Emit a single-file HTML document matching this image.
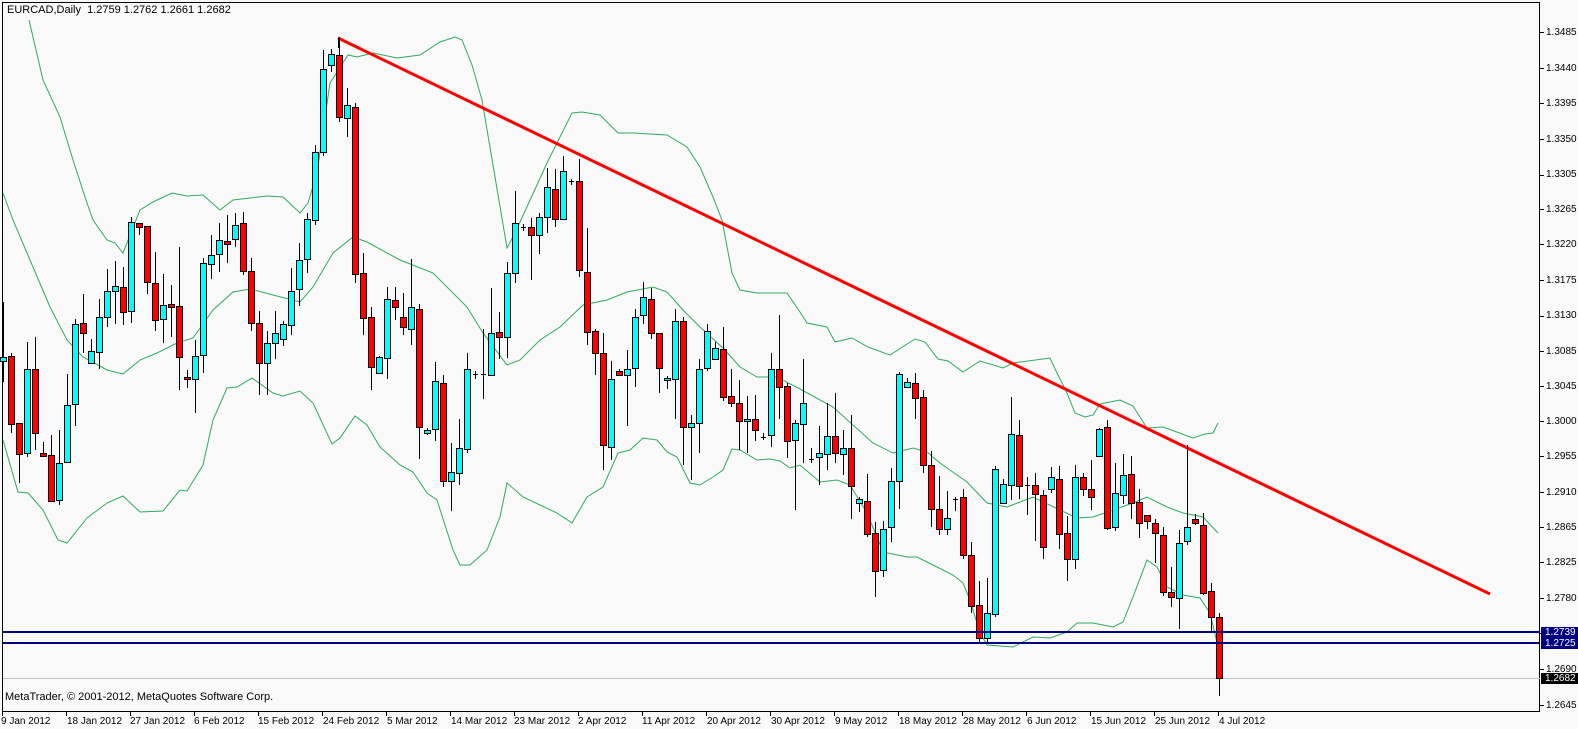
<!DOCTYPE html>
<html><head><meta charset="utf-8">
<style>
html,body{margin:0;padding:0;background:#f9f9f9;}
body{width:1578px;height:729px;overflow:hidden;position:relative;font-family:"Liberation Sans",Tahoma,sans-serif;}
.t{position:absolute;font-size:10px;color:#000;white-space:nowrap;line-height:11px;}
.py{left:1546px;}
.dx{top:716px;}
.box{position:absolute;left:1541px;width:37px;height:11px;color:#fff;font-size:10px;line-height:11px;padding-left:4px;box-sizing:border-box;}
</style></head><body>
<svg id="s" width="1578" height="729" style="position:absolute;left:0;top:0" xmlns="http://www.w3.org/2000/svg">
<rect x="2.5" y="2.5" width="1537" height="709" fill="#f9f9f9" stroke="#000" stroke-width="1"/>
<line x1="3" y1="678.5" x2="1540" y2="678.5" stroke="#c0c0c0" stroke-width="1"/>
<g fill="none" stroke="#2eaa5e" stroke-width="1">
<polyline points="29,20 43,80 60,117 73,160 87,203 93,220 107,240 115,243 123,253 140,210 153,202 172,193 187,196 203,195 220,210 233,200 250,198 267,196 283,197 300,213 308,203 317,173 330,83 348,55 357,57 373,53 397,58 420,55 440,42 455,37 462,40 472,65 482,100 507,248 515,233 547,163 572,113 582,112 600,115 618,133 633,133 667,135 687,147 700,167 713,197 722,220 732,273 740,290 757,293 787,293 800,312 807,323 827,327 835,342 852,338 868,347 890,355 915,339 925,342 938,359 948,361 963,372 980,361 1003,368 1013,363 1050,358 1057,373 1067,393 1075,413 1085,417 1093,415 1100,404 1120,400 1133,406 1147,428 1163,427 1193,438 1205,434 1213,433 1218,423"/>
<polyline points="3,193 13,220 30,260 50,307 67,340 83,357 107,370 123,374 140,360 157,353 177,343 193,338 213,310 233,292 250,289 273,295 300,302 313,287 333,253 353,237 367,242 400,260 433,273 467,307 483,333 507,365 520,360 540,340 560,327 583,305 607,300 627,292 653,287 667,292 683,310 700,327 723,348 740,367 757,377 777,377 800,389 833,407 873,443 893,453 913,448 927,452 940,463 967,482 987,503 1007,507 1033,497 1060,510 1077,518 1093,517 1113,510 1133,503 1147,497 1167,507 1183,513 1203,517 1218,533"/>
<polyline points="3,440 18,492 28,493 43,510 58,540 67,543 87,518 107,503 123,496 140,512 163,511 180,490 187,491 203,465 213,420 227,388 237,387 252,378 273,393 283,396 300,391 313,403 332,444 340,438 355,416 367,425 380,447 400,465 413,472 427,493 437,500 453,550 460,565 470,565 487,550 500,517 507,483 523,497 540,505 557,513 572,523 587,497 603,487 618,453 630,450 643,438 657,440 667,452 677,457 690,483 700,485 713,477 723,470 732,449 740,450 757,460 770,459 780,461 790,468 800,465 820,482 837,480 850,485 867,513 883,552 907,557 917,557 937,567 953,575 963,583 970,600 980,633 987,645 1013,647 1033,637 1050,638 1067,632 1077,623 1093,623 1113,627 1123,622 1133,597 1147,560 1157,567 1167,587 1183,595 1200,598 1210,613 1218,647"/>
</g>
<line x1="338" y1="38" x2="1490" y2="594" stroke="#ff0000" stroke-width="3"/>
<line x1="338.5" y1="38" x2="338.5" y2="48" stroke="#000" stroke-width="1"/>
<g id="c"></g>
<line x1="3" y1="632" x2="1540" y2="632" stroke="#000080" stroke-width="2"/>
<line x1="3" y1="643" x2="1540" y2="643" stroke="#000080" stroke-width="2"/>
<g stroke="#000" stroke-width="1" id="tk"></g>
</svg>
<div class="t" style="left:7px;top:5px;font-size:11px;">EURCAD,Daily&nbsp;&nbsp;1.2759 1.2762 1.2661 1.2682</div>
<div class="t" style="left:5px;top:692px;font-size:11px;">MetaTrader, © 2001-2012, MetaQuotes Software Corp.</div>
<div class="t py" style="top:27px">1.3485</div>
<div class="t py" style="top:63px">1.3440</div>
<div class="t py" style="top:98px">1.3395</div>
<div class="t py" style="top:134px">1.3350</div>
<div class="t py" style="top:169px">1.3305</div>
<div class="t py" style="top:204px">1.3265</div>
<div class="t py" style="top:239px">1.3220</div>
<div class="t py" style="top:275px">1.3175</div>
<div class="t py" style="top:310px">1.3130</div>
<div class="t py" style="top:346px">1.3085</div>
<div class="t py" style="top:381px">1.3045</div>
<div class="t py" style="top:416px">1.3000</div>
<div class="t py" style="top:451px">1.2955</div>
<div class="t py" style="top:487px">1.2910</div>
<div class="t py" style="top:522px">1.2865</div>
<div class="t py" style="top:557px">1.2825</div>
<div class="t py" style="top:593px">1.2780</div>
<div class="t py" style="top:664px">1.2690</div>
<div class="t py" style="top:700px">1.2645</div>
<div class="box" style="top:627px;background:#000080">1.2739</div>
<div class="box" style="top:638px;background:#000080">1.2725</div>
<div class="box" style="top:673px;background:#000">1.2682</div>
<div class="t dx" style="left:1px">9 Jan 2012</div>
<div class="t dx" style="left:67px">18 Jan 2012</div>
<div class="t dx" style="left:130px">27 Jan 2012</div>
<div class="t dx" style="left:194px">6 Feb 2012</div>
<div class="t dx" style="left:258px">15 Feb 2012</div>
<div class="t dx" style="left:323px">24 Feb 2012</div>
<div class="t dx" style="left:387px">5 Mar 2012</div>
<div class="t dx" style="left:451px">14 Mar 2012</div>
<div class="t dx" style="left:514px">23 Mar 2012</div>
<div class="t dx" style="left:578px">2 Apr 2012</div>
<div class="t dx" style="left:642px">11 Apr 2012</div>
<div class="t dx" style="left:707px">20 Apr 2012</div>
<div class="t dx" style="left:771px">30 Apr 2012</div>
<div class="t dx" style="left:835px">9 May 2012</div>
<div class="t dx" style="left:899px">18 May 2012</div>
<div class="t dx" style="left:963px">28 May 2012</div>
<div class="t dx" style="left:1027px">6 Jun 2012</div>
<div class="t dx" style="left:1091px">15 Jun 2012</div>
<div class="t dx" style="left:1155px">25 Jun 2012</div>
<div class="t dx" style="left:1219px">4 Jul 2012</div>
<script>
var D=[[357,361,302,382,1],[356,424,353,433,0],[423,454,423,483,0],[369,453,342,457,1],[369,433,337,450,0],[453,456,442,456,0],[455,501,435,501,0],[463,500,430,505,1],[405,462,374,462,1],[324,404,319,426,1],[323,333,294,353,0],[351,363,339,363,1],[317,352,299,369,1],[291,317,269,327,1],[286,291,261,324,1],[287,312,267,325,0],[222,311,217,323,1],[223,227,223,235,0],[226,282,226,294,0],[283,320,252,331,0],[305,319,274,343,1],[304,307,285,337,0],[306,357,247,390,0],[377,379,370,388,0],[356,379,340,413,1],[263,355,258,373,1],[255,264,235,279,1],[240,254,223,272,1],[241,244,215,263,0],[225,239,213,247,1],[223,271,212,275,0],[271,323,258,331,0],[323,363,311,395,0],[343,363,331,395,1],[333,343,311,359,1],[324,339,321,346,1],[291,325,268,335,1],[260,289,243,306,1],[219,259,213,273,1],[152,220,145,225,1],[69,152,50,156,1],[54,65,49,72,1],[55,117,37,122,0],[105,118,88,137,1],[107,274,103,283,0],[273,318,253,335,0],[317,367,307,390,0],[357,373,356,374,1],[299,358,287,379,1],[300,307,287,320,0],[317,327,293,335,0],[307,329,259,345,1],[309,427,304,459,0],[430,433,428,435,1],[381,429,362,441,1],[383,481,375,487,0],[472,481,443,511,1],[448,473,419,485,1],[369,449,353,453,1],[374,374,371,379,1],[374,374,329,399,1],[333,375,288,376,1],[332,337,312,359,0],[273,337,262,358,1],[223,273,191,283,1],[227,227,224,231,1],[227,235,218,280,0],[217,235,213,254,1],[187,217,168,233,1],[189,219,169,227,0],[171,219,156,220,1],[181,181,179,185,1],[181,270,159,277,0],[272,332,228,345,0],[331,353,329,375,0],[353,445,333,470,0],[379,447,361,460,1],[371,375,369,375,0],[369,375,350,426,1],[317,368,309,387,1],[297,315,282,324,1],[299,333,288,339,0],[333,368,333,393,0],[378,380,376,389,1],[321,379,309,419,1],[321,427,317,465,0],[423,427,415,480,1],[369,423,359,453,1],[331,368,324,371,1],[348,359,342,359,1],[349,397,327,401,0],[396,403,369,407,0],[403,421,380,450,0],[419,421,396,453,1],[419,430,395,441,0],[437,437,433,440,1],[369,435,353,447,1],[369,387,315,419,0],[386,441,383,458,0],[423,440,420,510,1],[403,424,359,463,1],[459,459,448,463,1],[453,457,426,485,1],[436,454,403,470,1],[436,453,393,463,0],[448,454,430,475,1],[448,486,415,519,0],[499,503,497,512,1],[501,534,474,537,0],[533,571,522,597,0],[529,570,521,577,1],[481,527,468,542,1],[374,481,372,509,1],[382,387,378,388,1],[383,398,373,419,0],[397,465,390,473,0],[465,509,451,527,0],[509,529,476,535,0],[518,529,491,535,1],[499,499,497,511,1],[497,555,489,559,0],[555,606,542,613,0],[605,638,581,642,0],[613,638,578,642,1],[469,614,466,617,1],[484,503,479,503,1],[434,485,397,500,1],[435,486,420,499,0],[485,485,477,515,1],[485,494,473,541,0],[495,547,490,559,0],[477,489,467,493,1],[479,534,466,549,0],[533,559,516,581,0],[477,559,465,569,1],[477,489,473,496,0],[489,497,460,510,0],[429,456,428,457,1],[427,528,420,530,0],[493,527,463,531,1],[475,495,454,504,1],[474,503,456,519,0],[502,523,489,538,0],[515,521,515,529,0],[523,533,519,563,0],[535,592,527,596,0],[592,597,567,607,0],[543,598,530,629,1],[527,541,445,545,1],[519,523,514,525,0],[525,593,513,595,0],[591,617,583,633,0],[617,678,613,696,0]];
var g=document.getElementById("c"),h="";
for(var i=0;i<D.length;i++){var d=D[i],x=3+8*i;
h+='<line x1="'+(x+0.5)+'" y1="'+d[2]+'" x2="'+(x+0.5)+'" y2="'+d[3]+'" stroke="#000" stroke-width="1"/>';
if(d[1]-d[0]<2){h+='<line x1="'+(x-2)+'" y1="'+(d[0]+0.5)+'" x2="'+(x+3)+'" y2="'+(d[0]+0.5)+'" stroke="#000" stroke-width="1"/>';}
else{h+='<rect x="'+(x-2.5)+'" y="'+(d[0]+0.5)+'" width="6" height="'+(d[1]-d[0])+'" fill="'+(d[4]?'#00ffff':'#ff0000')+'" stroke="#000" stroke-width="1"/>';}}
g.innerHTML=h;
var t="",ys=[32,68,103,139,175,209,244,280,316,351,386,421,456,492,527,562,598,633,669,705];
for(var j=0;j<ys.length;j++)t+='<line x1="1540" y1="'+(ys[j]+0.5)+'" x2="1544" y2="'+(ys[j]+0.5)+'"/>';
for(var k=0;k<20;k++){var xx=2+64*k;t+='<line x1="'+(xx+0.5)+'" y1="711" x2="'+(xx+0.5)+'" y2="716"/>';}
document.getElementById("tk").innerHTML=t;
</script>
</body></html>
